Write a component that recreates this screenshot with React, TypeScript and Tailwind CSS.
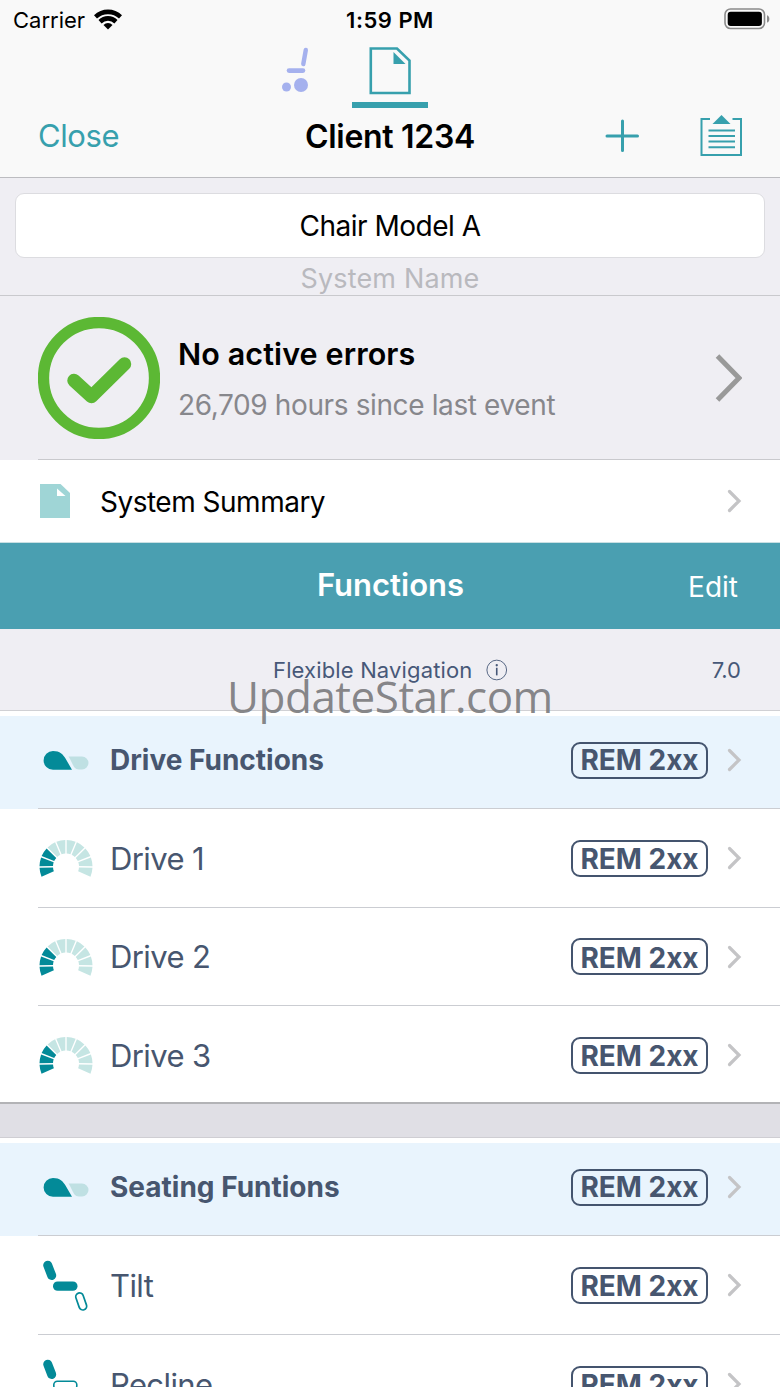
import type { ReactNode } from 'react';
import clsx from 'clsx';

type IconName = 'group' | 'gauge' | 'tilt' | 'recline';

interface Item {
  label: string;
  icon: IconName;
  header?: boolean;
}

const driveItems: Item[] = [
  { label: 'Drive Functions', icon: 'group', header: true },
  { label: 'Drive 1', icon: 'gauge' },
  { label: 'Drive 2', icon: 'gauge' },
  { label: 'Drive 3', icon: 'gauge' },
];

const seatingItems: Item[] = [
  { label: 'Seating Funtions', icon: 'group', header: true },
  { label: 'Tilt', icon: 'tilt' },
  { label: 'Recline', icon: 'recline' },
];

function Chevron() {
  return (
    <svg className="w-4 h-6 shrink-0" viewBox="0 0 16 24" fill="none" stroke="#c4c4c6" strokeWidth={3.2} strokeLinecap="round">
      <path d="M2.500 2.500L12 12L2.500 21.500" />
    </svg>
  );
}

function GaugeIcon() {
  // ten wedges swept from lower left to lower right, three of them lit
  const step = 22.8;
  const rad = (deg: number) => (deg * Math.PI) / 180;
  const pt = (r: number, deg: number) =>
    `${(28 + r * Math.cos(rad(deg))).toFixed(2)} ${(27.5 + r * Math.sin(rad(deg))).toFixed(2)}`;
  const wedges = Array.from({ length: 10 }, (_, i) => {
    const a = 156 + i * step;
    const b = a + step;
    return `M${pt(26.5, a + 1.5)}A26.5 26.5 0 0 1 ${pt(26.5, b - 1.5)}L${pt(13, b - 3)}A13 13 0 0 0 ${pt(13, a + 3)}Z`;
  });
  return (
    <svg className="w-[56px] h-[38px]" viewBox="0 0 56 38">
      {wedges.map((d, i) => (
        <path key={i} d={d} fill={i < 3 ? '#038a98' : '#c5e5e3'} />
      ))}
    </svg>
  );
}

function RowIcon({ name }: { name: IconName }) {
  if (name === 'gauge') return <GaugeIcon />;
  if (name === 'group') {
    return (
      <svg className="w-[54px] h-5" viewBox="-1 -0.5 54 20">
        <path d="M29.5 6H43A6.500 6.500 0 0 1 43 19H40C36 19 34.500 15.500 33 12.500C31.800 10 30.800 8 29.500 6Z" fill="#bfe0e3" />
        <path d="M14 0.500C21 0.500 24 4 26.500 8L33 19.300H14A9.400 9.400 0 0 1 14 0.500Z" fill="#038a98" />
      </svg>
    );
  }
  const tilt = name === 'tilt';
  return (
    <svg className="w-[54px] h-[52px]" viewBox="-1 -1 54 52" fill="none" stroke="#038a98">
      <path d="M8.700 5.200L12.700 15.500" strokeWidth={9} strokeLinecap="round" />
      {tilt ? (
        <rect x="14" y="21.500" width="24.500" height="9.300" rx="4.600" fill="#038a98" stroke="none" />
      ) : (
        <rect x="14.800" y="22.300" width="23" height="8" rx="3.500" strokeWidth={1.6} />
      )}
      <rect x="38.400" y="32.600" width="7.600" height="17.600" rx="3.800" strokeWidth={1.7} transform="rotate(-19 42.200 41.400)" />
    </svg>
  );
}

function Row({ item, last }: { item: Item; last?: boolean }) {
  return (
    <div className={clsx('shrink-0', item.header ? 'h-[98px] pt-[5px]' : last ? 'h-[96px]' : 'h-[98.7px]')}>
      <div className={clsx('h-full flex pl-[38px]', item.header && 'bg-[#e9f4fd]')}>
        <div className={clsx('flex-1 flex pr-[37px]', !last && 'border-b border-[#cbcdd2]')}>
          <div className={clsx('flex-1 flex items-center', item.header ? 'h-[88px]' : 'h-[98px]')}>
            <div className="w-[72px] shrink-0">
              <RowIcon name={item.icon} />
            </div>
            <span
              className={clsx(
                'flex-1 whitespace-nowrap text-[#47566f]',
                item.header ? 'text-[28px] font-bold' : 'pt-0.5 text-[31px] tracking-[-0.6px]'
              )}
            >
              {item.label}
            </span>
            <span
              className={clsx(
                'w-[137px] h-[37px] mr-[19px] border-2 border-[#44546e] rounded-[9px] flex items-center justify-center text-[28px] font-bold leading-none text-[#47566f] whitespace-nowrap',
                !item.header && 'pt-0.5'
              )}
            >
              REM 2xx
            </span>
            <Chevron />
          </div>
        </div>
      </div>
    </div>
  );
}

function Header({ children }: { children: ReactNode }) {
  return <header className="h-[178px] shrink-0 bg-[#f9f9f9] border-b border-[#bcbcc0]">{children}</header>;
}

export default function App() {
  return (
    <div className="relative w-[780px] h-[1387px] overflow-hidden bg-white flex flex-col font-['Inter',sans-serif] text-black">
      <Header>
        {/* Status bar */}
        <div className="h-10 grid grid-cols-3 items-center pl-[13px] pr-[10px] text-[22px]">
          <div className="flex items-center gap-2">
            <span>Carrier</span>
            <svg className="w-[30px] h-[22px] -mt-[3px]" viewBox="0 0 30 22">
              <path d="M1 7.300A20 20 0 0 1 29 7.300L26 10.600A16 16 0 0 0 4 10.600Z" />
              <path d="M5.500 12.100A13.300 13.300 0 0 1 24.500 12.100L21.400 15.400A9.200 9.200 0 0 0 8.600 15.400Z" />
              <path d="M10.500 16.900A6.400 6.400 0 0 1 19.500 16.900L15 21.400Z" />
            </svg>
          </div>
          <span className="pr-[3px] text-center font-semibold tracking-[0.5px]">1:59 PM</span>
          <svg className="w-[46px] h-[22px] justify-self-end -mt-0.5" viewBox="0 0 46 22">
            <rect x="1" y="1" width="39.500" height="19.500" rx="5.500" fill="none" stroke="#8b8b8b" strokeWidth={1.6} />
            <rect x="3.700" y="3.700" width="34.200" height="14.200" rx="3" />
            <path d="M43 7.200C46.200 8.200 46.200 13.600 43 14.600Z" fill="#8b8b8b" />
          </svg>
        </div>

        {/* Tabs */}
        <div className="h-[68px] flex pl-[280px]">
          <svg className="w-[30px] h-[46px] mt-[7px]" viewBox="0 0 30 46" stroke="#a5b1ee" fill="#a5b1ee">
            <path d="M25.800 3L23.300 17" strokeWidth={4.400} strokeLinecap="round" />
            <path d="M9 23.600H23" strokeWidth={4.600} strokeLinecap="round" />
            <circle cx="6.500" cy="40" r="4.500" stroke="none" />
            <circle cx="21" cy="38" r="7" stroke="none" />
          </svg>
          <div className="ml-[42px] w-[76px] flex flex-col items-center border-b-[6px] border-[#37a0ad]">
            <svg className="w-[42px] h-12 mt-[7px]" viewBox="0 0 42 48">
              <path d="M1.800 1.500H28L40.500 13.500V46H1.800Z" fill="none" stroke="#37a0ad" strokeWidth={2.600} />
              <path d="M24.500 5V17H36.500Z" fill="#37a0ad" />
            </svg>
          </div>
        </div>

        {/* Navigation bar */}
        <div className="h-14 grid grid-cols-3 items-center px-[38px]">
          <span className="text-[31px] text-[#37a0ad] tracking-[-0.4px]">Close</span>
          <h1 className="pt-px text-[32px] font-semibold text-center whitespace-nowrap tracking-[-0.3px]">Client 1234</h1>
          <div className="flex items-center justify-end gap-[61px] text-[#37a0ad]">
            <svg className="w-[34px] h-[34px]" viewBox="0 0 34 34" stroke="currentColor" strokeWidth={3} strokeLinecap="round">
              <path d="M17.500 2V31.500M2 17H32.500" />
            </svg>
            <svg className="w-[42px] h-[42px]" viewBox="0 0 42 42" fill="none" stroke="currentColor" strokeWidth={2}>
              <path d="M10 4H1.500V40H41V4H32.500" />
              <path d="M8.500 15.500H35M8.500 21H35M8.500 26.500H35M8.500 32.300H35" />
              <path d="M12.500 9L21.500 0L30.500 9Z" fill="currentColor" stroke="none" />
            </svg>
          </div>
        </div>
      </Header>

      {/* System name */}
      <section className="h-[118px] shrink-0 bg-[#efeef3] border-b border-[#c9c9cd] px-[15px] pt-[15px] text-center">
        <div className="h-[65px] rounded-[9px] border border-[#dcdce0] bg-white flex items-center justify-center text-[28px] tracking-[-0.5px]">
          Chair Model A
        </div>
        <div className="text-[27px] leading-[42px] tracking-[0.15px] text-[#b9b9be]">System Name</div>
      </section>

      {/* Error status */}
      <section className="h-[164px] shrink-0 bg-[#efeef3] pl-[38px]">
        <div className="h-full border-b border-[#c9c9cd] flex items-center pr-[38px]">
          <svg className="w-[122px] h-[122px] shrink-0" viewBox="0 0 122 122" fill="none" stroke="#5cb834">
            <circle cx="61" cy="61" r="55.500" strokeWidth={11.300} />
            <path d="M36 63.500L53.500 79.500L86.500 47" strokeWidth={13.500} strokeLinecap="round" strokeLinejoin="round" />
          </svg>
          <div className="flex-1 ml-[18px] pt-1.5 whitespace-nowrap">
            <div className="text-[30.5px] leading-[48px] font-semibold tracking-[0.1px]">No active errors</div>
            <div className="text-[28px] leading-[54px] tracking-[-0.38px] text-[#87878c]">26,709 hours since last event</div>
          </div>
          <svg className="w-7 h-[50px]" viewBox="0 0 28 50" fill="none" stroke="#999999" strokeWidth={5}>
            <path d="M3.500 3L25 25L3.500 47" />
          </svg>
        </div>
      </section>

      {/* Summary */}
      <section className="h-[83px] shrink-0 flex items-center pl-10 pr-[37px] border-b border-[#c9dfe3]">
        <svg className="w-[30px] h-[34px] mr-[30px]" viewBox="0 0 30 34">
          <path d="M0 0H20.500L30 9V34H0Z" fill="#9fd5d6" />
          <path d="M17 4.500V12H25.500Z" fill="#ffffff" />
        </svg>
        <span className="flex-1 pt-0.5 text-[28px] tracking-[-0.5px]">System Summary</span>
        <Chevron />
      </section>

      {/* Functions */}
      <section className="h-[86px] shrink-0 grid grid-cols-3 items-center px-[42px] bg-[#4a9fb1] text-white">
        <h2 className="col-start-2 pb-0.5 pl-px text-center text-[31px] font-semibold">Functions</h2>
        <span className="pt-0.5 text-right text-[28px]">Edit</span>
      </section>
      <section className="h-[82px] shrink-0 grid grid-cols-3 items-center px-[39px] bg-[#efeef3] border-b border-[#d0d0d4] text-[22px] text-[#475878]">
        <div className="col-start-2 flex items-center justify-center gap-[13px] whitespace-nowrap">
          <span className="pt-0.5 tracking-[0.15px]">Flexible Navigation</span>
          <svg className="w-6 h-6" viewBox="0 0 24 24" fill="none" stroke="currentColor">
            <circle cx="12" cy="12" r="11" strokeWidth={1} />
            <circle cx="12" cy="6.700" r="1.300" fill="currentColor" stroke="none" />
            <path d="M12 9.500V18" strokeWidth={1.800} />
          </svg>
        </div>
        <span className="pt-0.5 text-right">7.0</span>
      </section>

      {driveItems.map((item, i) => (
        <Row key={item.label} item={item} last={i === driveItems.length - 1} />
      ))}
      <div className="h-[36px] shrink-0 bg-[#e0dfe5] border-t-2 border-t-[#b3b3b6] border-b border-b-[#cfced3]" />
      {seatingItems.map((item) => (
        <Row key={item.label} item={item} />
      ))}

      {/* Watermark */}
      <div className="absolute left-[227px] top-[666px] text-[44px] leading-[60px] tracking-[-0.5px] whitespace-nowrap text-[#7f7f82]/95 font-['Open_Sans',sans-serif]">
        UpdateStar.com
      </div>
    </div>
  );
}
